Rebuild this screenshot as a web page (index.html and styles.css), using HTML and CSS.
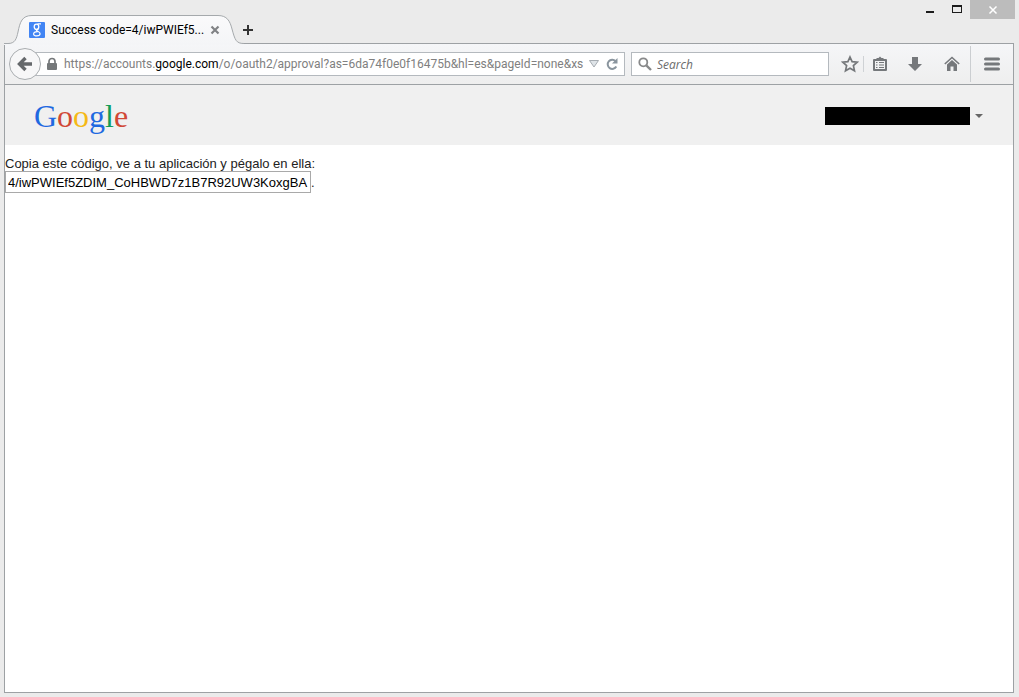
FILE: index.html
```html
<!DOCTYPE html>
<html lang="es">
<head>
<meta charset="utf-8">
<title>Success code</title>
<link rel="stylesheet" href="styles.css">
</head>
<body>
<div class="window">
  <header class="titlebar">
    <div class="tab">
      <svg class="tab-shape" width="240" height="30" viewBox="0 0 240 30" aria-hidden="true">
        <defs><linearGradient id="tabfill" x1="0" y1="0" x2="0" y2="1"><stop offset="0" stop-color="#fafafb"/><stop offset="1" stop-color="#f4f5f7"/></linearGradient></defs>
        <path d="M0 30V28.500H4C11 28.500 12.500 24 14 17C16 7 18 .500 28 .500H214C223 .500 226 6 228 14C231 25 232 28.500 240 28.500V30Z" fill="url(#tabfill)"/>
        <path d="M0 28.500H4C11 28.500 12.500 24 14 17C16 7 18 .500 28 .500H214C223 .500 226 6 228 14C231 25 232 28.500 240 28.500" fill="none" stroke="#a5a9ac"/>
      </svg>
      <svg class="favicon" width="16" height="16" viewBox="0 0 16 16" aria-hidden="true">
        <rect width="16" height="16" rx="1" fill="#4285f4"/>
        <g fill="none" stroke="#fff"><ellipse cx="7.500" cy="4.800" rx="2.300" ry="2.700" stroke-width="1.300"/><path d="M8.500 1.900H12M9.300 6.900C8.500 8 7.200 7.800 7.600 8.600C8 9.300 11.300 9.600 11.100 11.700C10.900 14.500 4.600 14.600 4.600 12C4.600 10.400 6.500 9.800 8.700 9.700" stroke-width="1.200"/></g>
      </svg>
      <span class="tab-title">Success code=4/iwPWIEf5...</span>
      <button class="tab-close" aria-label="Close tab"><svg width="10" height="10" viewBox="0 0 10 10"><path d="M1.500 1.500L8.500 8.500M8.500 1.500L1.500 8.500" stroke="#808285" stroke-width="2.200"/></svg></button>
    </div>
    <button class="new-tab" aria-label="New tab"><svg width="12" height="12" viewBox="0 0 12 12"><path d="M6 1V11M1 6H11" stroke="#333" stroke-width="2"/></svg></button>
    <div class="controls">
      <button class="control" aria-label="Minimize"><svg width="10" height="10" viewBox="0 0 10 10"><path d="M1 6H9V8H1Z" fill="#1c1c1c"/></svg></button>
      <button class="control" aria-label="Maximize"><svg width="10" height="10" viewBox="0 0 10 10"><path d="M0 0H10V8H0ZM1 2V7H9V2Z" fill="#1c1c1c" fill-rule="evenodd"/></svg></button>
      <button class="control control-close" aria-label="Close"><svg width="10" height="10" viewBox="0 0 10 10"><path d="M1.500 1.500L8.500 8.500M8.500 1.500L1.500 8.500" stroke="#fff" stroke-width="1.500"/></svg></button>
    </div>
  </header>
  <div class="frame">
    <nav class="toolbar">
      <button class="back" aria-label="Back"><svg width="16" height="16" viewBox="0 0 16 16"><path d="M8.500 2L2.500 8L8.500 14M3 8H15" fill="none" stroke="#65686b" stroke-width="3.400"/></svg></button>
      <div class="address">
        <svg class="lock" width="12" height="14" viewBox="0 0 12 14" aria-hidden="true"><path d="M3 7V4.500A3 3 0 0 1 9 4.500V7" fill="none" stroke="#75787a" stroke-width="1.700"/><rect x="1" y="6" width="10" height="7" rx="1" fill="#75787a"/></svg>
        <div class="url" role="textbox" aria-label="Address" contenteditable="true" spellcheck="false">https://accounts.<span class="host">google.com</span>/o/oauth2/approval?as=6da74f0e0f16475b&amp;hl=es&amp;pageId=none&amp;xs</div>
        <button class="field-icon" aria-label="Show history"><svg width="12" height="12" viewBox="0 0 12 12"><path d="M1.500 2.500H10.500L6 9Z" fill="#dfe4e8" stroke="#a6acb2"/></svg></button>
        <button class="field-icon reload" aria-label="Reload"><svg width="14" height="14" viewBox="0 0 14 14"><path d="M10.500 4A4.600 4.600 0 1 0 11.300 9.600" fill="none" stroke="#8a959e" stroke-width="2"/><path d="M12.500 1V6.500H7Z" fill="#8a959e"/></svg></button>
      </div>
      <label class="search">
        <svg width="14" height="14" viewBox="0 0 14 14" aria-hidden="true"><circle cx="5.300" cy="5.300" r="4" fill="none" stroke="#88898a" stroke-width="1.800"/><path d="M8.300 8.300L13 13" stroke="#88898a" stroke-width="2.400"/></svg>
        <input class="search-input" type="search" aria-label="Search" placeholder="Search">
      </label>
      <div class="tools">
        <button class="tool" aria-label="Bookmark"><svg width="18" height="18" viewBox="0 0 18 18"><path d="M9 2L11.100 6.700L16.200 7.200L12.400 10.600L13.500 15.800L9 13.200L4.500 15.800L5.600 10.600L1.800 7.200L6.900 6.700Z" fill="none" stroke="#75787b" stroke-width="1.700"/></svg></button>
        <button class="tool bookmarks" aria-label="Bookmarks menu"><svg width="16" height="16" viewBox="0 0 16 16"><path d="M2 4H14V14H2Z" fill="none" stroke="#75787b" stroke-width="2" stroke-linejoin="round"/><path d="M4.500 4V2H6.500L8 .500L9.500 2H11.500V4Z" fill="#75787b"/><path d="M4 6.500H5.500M7 6.500H12M4 9H5.500M7 9H12M4 11.500H5.500M7 11.500H12" stroke="#75787b"/></svg></button>
        <button class="tool download" aria-label="Downloads"><svg width="16" height="16" viewBox="0 0 16 16"><path d="M5 1H11V8H15L8 15L1 8H5Z" fill="#75787b"/></svg></button>
        <button class="tool home" aria-label="Home"><svg width="16" height="16" viewBox="0 0 16 16"><path d="M.800 8L8 1.500L15.200 8" fill="none" stroke="#75787b" stroke-width="1.600"/><path d="M3 8.500L8 4L13 8.500V15H9.500V10.500H6.500V15H3Z" fill="#75787b"/></svg></button>
        <button class="tool menu" aria-label="Menu"><svg width="16" height="14" viewBox="0 0 16 14"><path d="M1.500 2H14.500M1.500 7H14.500M1.500 12H14.500" stroke="#75787b" stroke-width="3" stroke-linecap="round"/></svg></button>
      </div>
    </nav>
    <div class="google-bar">
      <a class="logo" href="#" aria-label="Google"><span class="blue">G</span><span class="red">o</span><span class="yellow">o</span><span class="blue">g</span><span class="green">l</span><span class="red">e</span></a>
      <button class="account" aria-label="Account"><span class="redacted"></span><svg width="8" height="4" viewBox="0 0 8 4"><path d="M0 0H8L4 4Z" fill="#666"/></svg></button>
    </div>
    <main class="content">
      <label class="instruction" for="code">Copia este código, ve a tu aplicación y pégalo en ella:</label>
      <div class="code-row"><input class="code" id="code" type="text" readonly value="4/iwPWIEf5ZDIM_CoHBWD7z1B7R92UW3KoxgBA">.</div>
    </main>
  </div>
</div>
</body>
</html>
```
FILE: styles.css
```css
* { box-sizing: border-box; }
body {
  margin: 0;
  background: #ebebeb;
  color: #222;
  font-family: "Open Sans", "Noto Sans", sans-serif;
  font-size: 12px;
}
button {
  display: flex;
  align-items: center;
  justify-content: center;
  padding: 0;
  border: 0;
  background: none;
}
svg { display: block; flex: none; }
.window {
  display: flex;
  flex-direction: column;
  min-height: 100vh;
  padding: 0 5px 4px 4px;
}
.titlebar {
  display: flex;
  height: 43px;
  flex: none;
}
.tab {
  position: relative;
  z-index: 1;
  display: flex;
  align-items: center;
  width: 236px;
  height: 29px;
  margin-top: 15px;
  padding-left: 25px;
  color: #000;
}
.tab-shape { position: absolute; left: 0; top: 0; }
.favicon, .tab-title, .tab-close { position: relative; }
.tab-title, .url { font-family: Roboto, "Open Sans", sans-serif; }
.tab-title { margin-left: 6px; white-space: nowrap; width: 154px; }
.tab-close { width: 20px; height: 20px; }
.new-tab { width: 16px; height: 30px; margin-top: 15px; }
.controls { display: flex; margin-left: auto; height: 19px; margin-right: -1px; }
.control { width: 27px; }
.control-close { width: 45px; background: #bcbcbc; }
.frame {
  display: flex;
  flex-direction: column;
  flex: 1;
  border: 1px solid #9da1a4;
  background: #fff;
}
.toolbar {
  display: flex;
  align-items: center;
  height: 41px;
  padding-left: 4px;
  border-bottom: 1px solid #9da1a4;
  background: linear-gradient(#f5f6f8, #eeeeee);
}
.back {
  position: relative;
  z-index: 1;
  width: 32px;
  height: 32px;
  border: 1px solid #a9adb0;
  border-radius: 50%;
  background: #f7f7f8;
}
.address, .search {
  display: flex;
  align-items: center;
  height: 24px;
  border: 1px solid #b4b9be;
  background: #fff;
}
.address {
  flex: 1;
  min-width: 0;
  margin-left: -6px;
  padding-left: 10px;
}
.url {
  flex: 1;
  min-width: 0;
  margin-left: 6px;
  overflow: hidden;
  white-space: nowrap;
  color: #808080;
  outline: 0;
}
.host { color: #000; }
.field-icon { width: 16px; height: 20px; }
.reload { margin: 0 4px 0 2px; }
.search { width: 198px; margin-left: 6px; padding-left: 6px; }
.search-input {
  flex: 1;
  min-width: 0;
  margin-left: 5px;
  padding: 0;
  border: 0;
  outline: 0;
  background: none;
  font: inherit;
}
.search-input::placeholder { color: #6c6c6c; font-style: italic; }
.tools { display: flex; align-items: center; height: 100%; margin-left: 8px; }
.tool { width: 26px; height: 16px; }
.bookmarks { width: 33px; border-left: 1px solid #cfd2d5; }
.download, .home { width: 37px; }
.menu { width: 43px; height: 36px; border-left: 1px solid #cbced1; }
.google-bar {
  display: flex;
  align-items: center;
  justify-content: space-between;
  height: 60px;
  padding: 2px 30px 0 29px;
  background: #f0f0f0;
}
.logo {
  font-family: "Liberation Serif", serif;
  font-size: 32px;
  line-height: 36px;
  text-decoration: none;
}
.blue { color: #1f69e0; }
.red { color: #d14836; }
.yellow { color: #f5b916; }
.green { color: #109d59; }
.account { gap: 5px; }
.redacted { width: 145px; height: 18px; background: #000; }
.content {
  padding-top: 11px;
  font-family: "Liberation Sans", Arial, sans-serif;
  font-size: 13px;
  line-height: 15px;
}
.instruction { display: block; }
.code-row { display: flex; align-items: center; }
.code {
  width: 306px;
  height: 22px;
  padding: 0 2px;
  border: 1px solid #a9a9a9;
  background: #fff;
  color: #000;
  font: inherit;
}
```
